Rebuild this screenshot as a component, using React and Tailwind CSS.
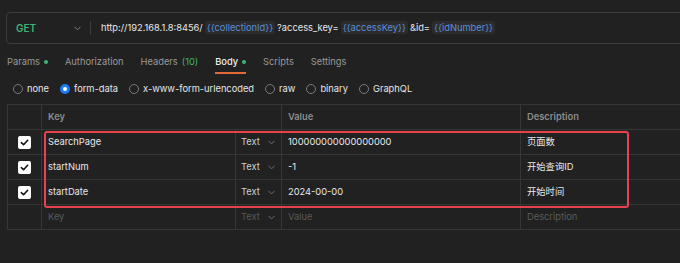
import React from "react";

const font = { fontFamily: "Inter, 'Noto Sans CJK SC', sans-serif" };

function Var({ children }) {
  return (
    <span className="mx-[2px] rounded-[3px] bg-[#2c2c2c] px-[2px] py-[1px] text-[#5b8fd8]">{children}</span>
  );
}

function Chevron({ className = "" }) {
  return (
    <svg width="9" height="9" viewBox="0 0 10 10" className={className} fill="none">
      <path d="M2 3.5 L5 6.5 L8 3.5" stroke="currentColor" strokeWidth="1" strokeLinecap="round" strokeLinejoin="round" />
    </svg>
  );
}

function Radio({ checked, label }) {
  return (
    <div className="flex items-center gap-[4px]">
      {checked ? (
        <span className="h-[10px] w-[10px] rounded-full border-[3px] border-[#1b7cf5] bg-white" />
      ) : (
        <span className="h-[10px] w-[10px] rounded-full border border-[#7a7a7a]" />
      )}
      <span className="text-[#e6e6e6]">{label}</span>
    </div>
  );
}

function Check() {
  return (
    <span className="flex h-[13px] w-[13px] items-center justify-center rounded-[2px] bg-white">
      <svg width="9" height="9" viewBox="0 0 10 10" fill="none">
        <path d="M1.5 5.2 L4 7.5 L8.5 2.5" stroke="#111" strokeWidth="1.8" strokeLinecap="round" strokeLinejoin="round" />
      </svg>
    </span>
  );
}

function Row({ k, v, d, placeholder }) {
  const txt = placeholder ? "text-[#5a5a5a]" : "text-[#e8e8e8]";
  return (
    <div className="flex h-[25px] border-b border-[#363636]">
      <div className="flex w-[34px] items-center justify-center border-r border-[#363636]">
        {!placeholder && <Check />}
      </div>
      <div className={`flex w-[194px] items-center border-r border-[#363636] pl-[6px] ${txt}`}>{k}</div>
      <div className={`flex w-[46px] items-center gap-[7px] border-r border-[#363636] pl-[5px] ${placeholder ? "text-[#5a5a5a]" : "text-[#d0d0d0]"}`}>
        <span>Text</span>
        <Chevron className="text-[#777]" />
      </div>
      <div className={`flex w-[239px] items-center border-r border-[#363636] pl-[6px] ${txt}`}>{v}</div>
      <div className={`flex flex-1 items-center pl-[6px] ${txt}`}>{d}</div>
    </div>
  );
}

export default function App() {
  return (
    <div className="h-[263px] w-[680px] overflow-hidden bg-[#212121] text-[9.3px]" style={font}>
      <div className="pt-[12px] pl-[6px]">
        <div className="flex h-[32px] w-[700px] items-center rounded-[4px] border border-[#3c3c3c] text-[10px]">
          <div className="flex w-[83px] items-center justify-between pl-[9px] pr-[8px]">
            <span className="font-semibold text-[#3fb574]">GET</span>
            <Chevron className="text-[#8a8a8a]" />
          </div>
          <div className="h-[14px] w-px bg-[#3c3c3c]" />
          <div className="pl-[10px] text-[9.3px] text-[#e8e8e8]">
            http://192.168.1.8:8456/<Var>{"{{collectionId}}"}</Var>?access_key=<Var>{"{{accessKey}}"}</Var>&amp;id=<Var>{"{{idNumber}}"}</Var>
          </div>
        </div>
      </div>

      <div className="mt-[6px] flex h-[24px] items-stretch gap-[17px] pl-[7px] text-[#9a9a9a]">
        <div className="flex items-center gap-[4px]">Params<span className="h-[4px] w-[4px] rounded-full bg-[#3fb574]" /></div>
        <div className="flex items-center">Authorization</div>
        <div className="flex items-center">Headers<span className="ml-[4px] text-[#3fb574]">(10)</span></div>
        <div className="flex items-center gap-[4px] border-b-2 border-[#e06c3c] pt-[2px] font-medium text-[#f0f0f0]">Body<span className="h-[4px] w-[4px] rounded-full bg-[#3fb574]" /></div>
        <div className="flex items-center">Scripts</div>
        <div className="flex items-center">Settings</div>
      </div>

      <div className="mt-[6px] flex h-[17px] items-center gap-[11px] pl-[13px]">
        <Radio label="none" />
        <Radio checked label="form-data" />
        <Radio label="x-www-form-urlencoded" />
        <Radio label="raw" />
        <Radio label="binary" />
        <Radio label="GraphQL" />
      </div>

      <div className="relative mt-[7px] ml-[7px] border-l border-t border-[#363636]">
        <div className="flex h-[25px] border-b border-[#363636] font-semibold text-[#8c8c8c]">
          <div className="w-[34px] border-r border-[#363636]" />
          <div className="flex w-[240px] items-center border-r border-[#363636] pl-[6px]">Key</div>
          <div className="flex w-[239px] items-center border-r border-[#363636] pl-[6px]">Value</div>
          <div className="flex flex-1 items-center pl-[6px]">Description</div>
        </div>
        <Row k="SearchPage" v="100000000000000000" d="页面数" />
        <Row k="startNum" v="-1" d="开始查询ID" />
        <Row k="startDate" v="2024-00-00" d="开始时间" />
        <Row placeholder k="Key" v="Value" d="Description" />
        <div className="pointer-events-none absolute left-[36px] top-[26px] h-[77px] w-[585px] rounded-[3px] border-2 border-[#e8424f]" />
      </div>
    </div>
  );
}
